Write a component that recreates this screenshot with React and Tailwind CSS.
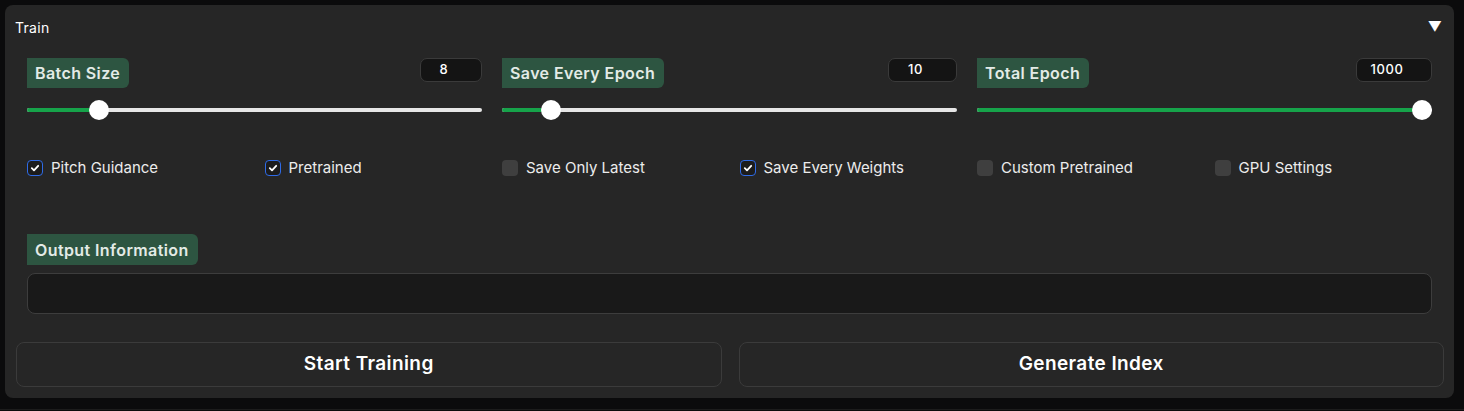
import React from "react";

const font = { fontFamily: "Inter, 'Open Sans', sans-serif" };

function Badge({ children, h = "h-[30px]" }) {
  return (
    <div
      className={`inline-flex items-center ${h} pl-[8px] pr-[9px] bg-[#2d5541] rounded-r-[6px] text-[16px] tracking-[0.4px] font-semibold text-[#e3ebe6]`}
    >
      {children}
    </div>
  );
}

function SliderBlock({ label, value, pct, w }) {
  return (
    <div className="flex flex-col">
      <div className="flex items-start justify-between">
        <Badge>{label}</Badge>
        <div
          className={`${w} h-[24px] bg-[#141414] border border-[#3a3a3a] rounded-[7px] flex items-center justify-center pr-[14px] text-[13px] tracking-[0.6px] font-medium text-white`}
        >
          {value}
        </div>
      </div>
      <div className="relative h-[20px] mt-[12px] flex items-center">
        <div className="w-full h-[4px] rounded-full bg-[#e6e6e6]" />
        <div
          className="absolute left-0 h-[4px] rounded-full bg-[#16a34a]"
          style={{ width: `calc(10px + (100% - 20px) * ${pct / 100})` }}
        />
        <div
          className="absolute w-[20px] h-[20px] rounded-full bg-white -translate-x-1/2"
          style={{ left: `calc(10px + (100% - 20px) * ${pct / 100})` }}
        />
      </div>
    </div>
  );
}

function Check({ label, checked }) {
  return (
    <div className="flex items-center gap-[8px] h-[16px]">
      {checked ? (
        <div className="w-[16px] h-[16px] rounded-[4px] border-[1.5px] border-[#2f6be6] bg-[#1c1c1c] flex items-center justify-center">
          <svg width="10" height="10" viewBox="0 0 10 10">
            <polyline
              points="1.8,5.2 4,7.3 8.2,2.8"
              fill="none"
              stroke="white"
              strokeWidth="1.8"
              strokeLinecap="round"
              strokeLinejoin="round"
            />
          </svg>
        </div>
      ) : (
        <div className="w-[16px] h-[16px] rounded-[4px] bg-[#3f3f3f]" />
      )}
      <span className="text-[15px] text-[#ececec]">{label}</span>
    </div>
  );
}

export default function App() {
  return (
    <div className="w-[1464px] h-[411px] bg-[#0b0b0c] pt-[5px] px-[5px] relative" style={font}>
      <div className="w-[1449px] h-[393px] bg-[#262626] rounded-[8px] flex flex-col">
        <div className="h-[44px] flex items-center justify-between pl-[10px] pr-[12px]">
          <span className="text-[14px] tracking-[0.3px] text-white">Train</span>
          <span className="text-[14px] text-white leading-none">▼</span>
        </div>
        <div className="mt-[9px] px-[22px] grid grid-cols-3 gap-x-[20px]">
          <SliderBlock label="Batch Size" value="8" pct={14.25} w="w-[62px]" />
          <SliderBlock label="Save Every Epoch" value="10" pct={9} w="w-[69px]" />
          <SliderBlock label="Total Epoch" value="1000" pct={100} w="w-[76px]" />
        </div>
        <div className="mt-[40px] px-[22px] grid grid-cols-[repeat(6,237.5px)]">
          <Check label="Pitch Guidance" checked />
          <Check label="Pretrained" checked />
          <Check label="Save Only Latest" />
          <Check label="Save Every Weights" checked />
          <Check label="Custom Pretrained" />
          <Check label="GPU Settings" />
        </div>
        <div className="mt-[58px] px-[22px] flex flex-col">
          <div>
            <Badge h="h-[31px]">Output Information</Badge>
          </div>
          <div className="mt-[8px] h-[41px] bg-[#191919] border border-[#3d3d3d] rounded-[8px]" />
        </div>
        <div className="mt-[28px] pl-[11px] pr-[10px] flex gap-[17px]">
          <button className="flex-1 h-[45px] border border-[#3b3b3b] rounded-[8px] bg-[#262626] text-white text-[19px] tracking-[0.4px] font-semibold">
            Start Training
          </button>
          <button className="flex-1 h-[45px] border border-[#3b3b3b] rounded-[8px] bg-[#262626] text-white text-[19px] tracking-[0.4px] font-semibold">
            Generate Index
          </button>
        </div>
      </div>
      <div className="absolute left-0 right-0 top-[409px] h-px bg-[#1c1c1c]" />
    </div>
  );
}
